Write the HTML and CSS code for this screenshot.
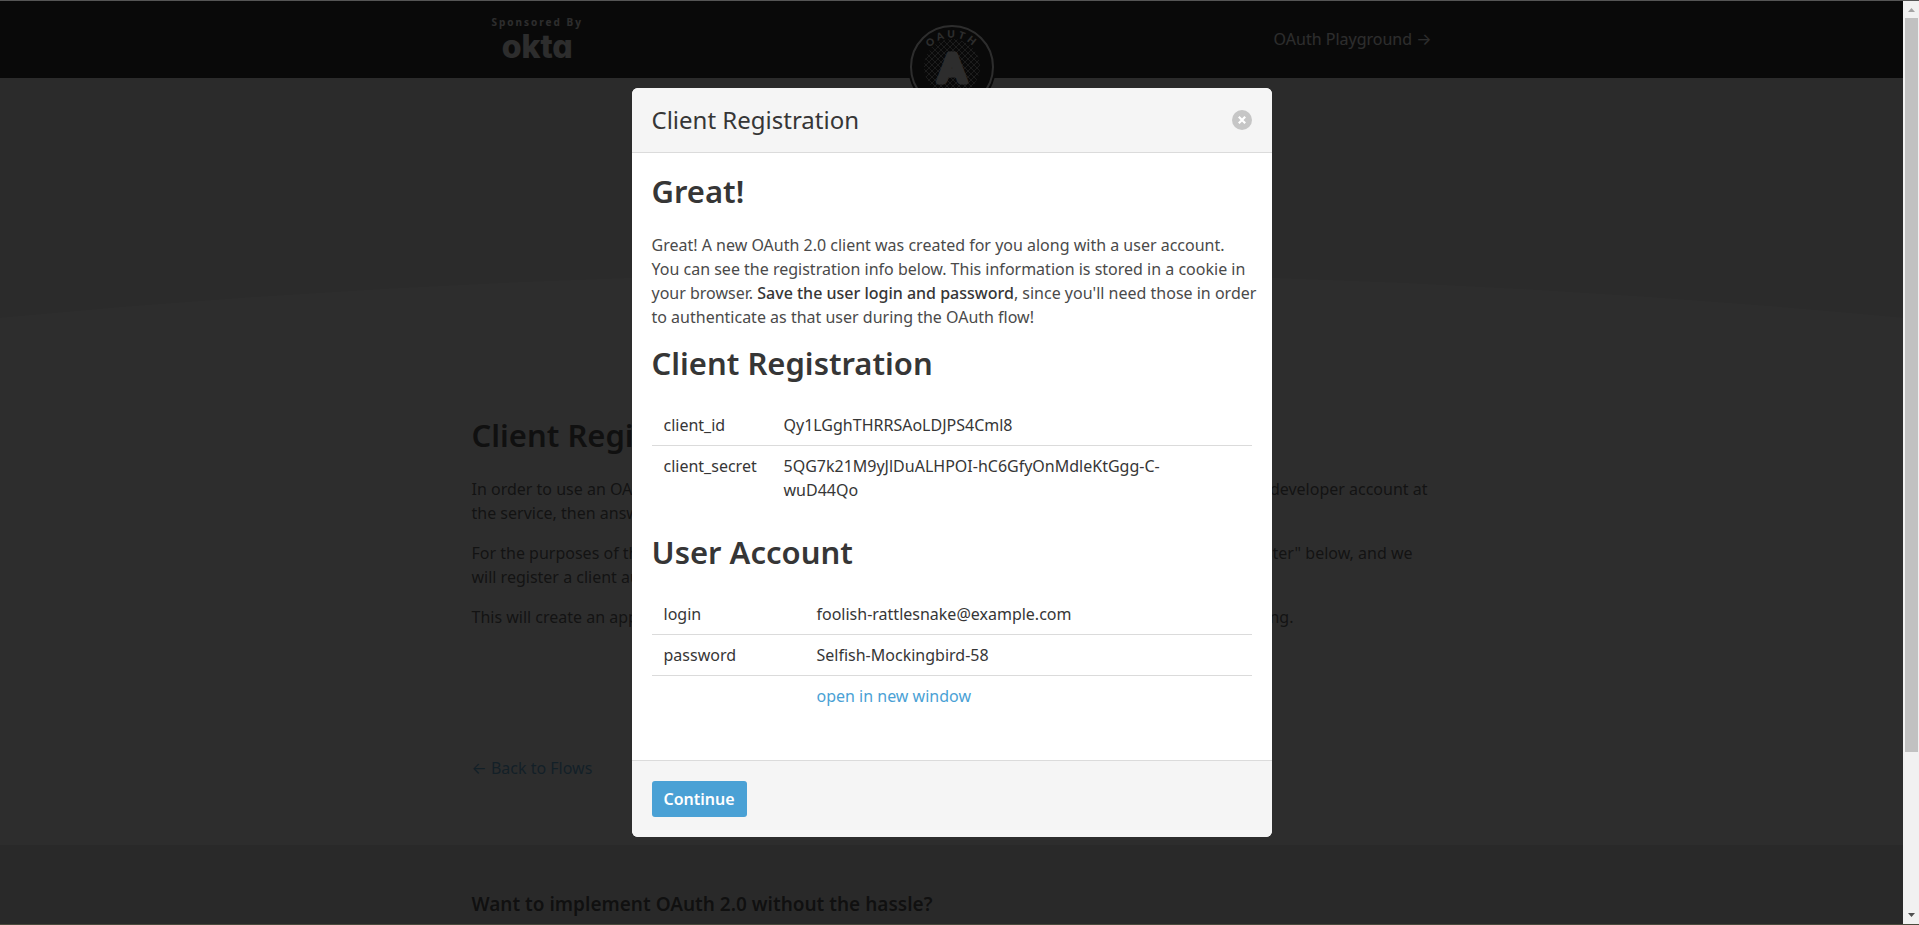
FILE: index.html
```html
<!DOCTYPE html>
<html lang="en">
<head>
<meta charset="utf-8">
<title>OAuth 2.0 Playground</title>
<link rel="stylesheet" href="styles.css">
</head>
<body>
<div class="page">
  <header class="navbar">
    <div class="container navbar-grid">
      <a class="sponsor" href="#">
        <span class="sponsor-label">Sponsored By</span>
        <span class="sponsor-logo">okta</span>
      </a>
      <svg class="oauth-logo" viewBox="0 0 88 88" role="img" aria-label="OAuth">
        <defs>
          <pattern id="mesh" width="6" height="6" patternUnits="userSpaceOnUse">
            <path d="M0 0L6 6M6 0L0 6" stroke="#888" stroke-width="1"/>
          </pattern>
          <path id="arc" d="M14.500 44A29.500 29.500 0 0 1 73.500 44"/>
        </defs>
        <circle cx="44" cy="44" r="44" fill="#000"/>
        <circle cx="44" cy="44" r="41" fill="none" stroke="#fff" stroke-width="2"/>
        <circle cx="44" cy="44" r="28" fill="url(#mesh)"/>
        <text class="logo-arc-text"><textPath href="#arc" startOffset="50%" text-anchor="middle">OAUTH</textPath></text>
        <text class="logo-letter" x="44" y="59" text-anchor="middle">A</text>
      </svg>
      <a class="navbar-link" href="#">OAuth Playground <span class="arrow">→</span></a>
    </div>
  </header>

  <div class="hero">
    <svg class="hero-curve" viewBox="0 0 1903 339" preserveAspectRatio="none" aria-hidden="true">
      <path d="M0 240Q951 150 1903 240V339H0Z" fill="#fff"/>
    </svg>
  </div>

  <main class="container content">
    <h1 class="title">Client Registration</h1>
    <p class="copy">
      <span class="line"><span>In order to use an OAuth API, you'll first need to register your application.</span> <span>This involves a developer account at</span></span>
      <span class="line">the service, then answering a few questions about your application.</span>
    </p>
    <p class="copy">
      <span class="line line-short"><span>For the purposes of this demo, you can register an application here.</span> <span>Click "Register" below, and we</span></span>
      <span class="line">will register a client automatically.</span>
    </p>
    <p class="copy">
      <span class="line line-half"><span>This will create an application and a user account</span> <span>that you can use for testing.</span></span>
    </p>
    <a class="link back" href="#"><span class="arrow">←</span> Back to Flows</a>
  </main>

  <footer class="promo">
    <div class="container">
      <h2 class="promo-title">Want to implement OAuth 2.0 without the hassle?</h2>
    </div>
  </footer>

  <div class="modal">
    <section class="modal-card" role="dialog" aria-modal="true" aria-labelledby="modal-title">
      <header class="modal-head">
        <p class="modal-title" id="modal-title">Client Registration</p>
        <button class="close" type="button" aria-label="Close">
          <svg viewBox="0 0 20 20" width="20" height="20" aria-hidden="true"><path d="M6.800 6.800L13.200 13.200M13.200 6.800L6.800 13.200" stroke="#fff" stroke-width="2.200"/></svg>
        </button>
      </header>
      <div class="modal-body">
        <h1 class="title">Great!</h1>
        <p class="intro">Great! A new OAuth 2.0 client was created for you along with a user account.<br>You can see the registration info below. This information is stored in a cookie in<br>your browser. <strong>Save the user login and password</strong>, since you'll need those in order<br>to authenticate as that user during the OAuth flow!</p>
        <h1 class="title">Client Registration</h1>
        <table class="table table-client">
          <tr><th scope="row">client_id</th><td>Qy1LGghTHRRSAoLDJPS4Cml8</td></tr>
          <tr><th scope="row">client_secret</th><td>5QG7k21M9yJlDuALHPOI-hC6GfyOnMdleKtGgg-C-<wbr>wuD44Qo</td></tr>
        </table>
        <h1 class="title">User Account</h1>
        <table class="table table-user">
          <tr><th scope="row">login</th><td>foolish-rattlesnake@example.com</td></tr>
          <tr><th scope="row">password</th><td>Selfish-Mockingbird-58</td></tr>
          <tr><td></td><td><a class="link" href="#">open in new window</a></td></tr>
        </table>
      </div>
      <footer class="modal-foot">
        <button class="button" type="button">Continue</button>
      </footer>
    </section>
  </div>
</div>
<div class="scrollbar" aria-hidden="true">
  <svg class="scroll-arrow" viewBox="0 0 16 16"><path d="M5 11L8.500 7L12 11Z" fill="#a3a3a3"/></svg>
  <div class="scroll-track"><div class="scroll-thumb"></div></div>
  <svg class="scroll-arrow" viewBox="0 0 16 16"><path d="M5 5L8.500 9L12 5Z" fill="#505050"/></svg>
</div>
</body>
</html>
```

FILE: styles.css
```css
* {
  box-sizing: border-box;
  margin: 0;
  padding: 0;
}

body {
  display: flex;
  height: 100vh;
  overflow: hidden;
  border-top: 1px solid #555;
  border-bottom: 1px solid #4a4a3c;
  background: #fff;
  color: #4a4a4a;
  font: 16px/24px "Noto Sans", "Open Sans", sans-serif;
}

.page {
  position: relative;
  flex: 1;
  min-width: 0;
  overflow: hidden;
}

.container {
  width: 100%;
  max-width: 960px;
  margin: 0 auto;
}

.link {
  color: #4aa1d5;
  text-decoration: none;
}

.arrow {
  font-family: Inter, sans-serif;
}

/* Top bar */
.navbar {
  height: 77px;
  background: #000;
}

.navbar-grid {
  display: grid;
  grid-template-columns: 1fr 88px 1fr;
}

.sponsor {
  justify-self: start;
  display: flex;
  flex-direction: column;
  align-items: center;
  padding: 14px 0 0 20px;
  color: #fff;
  text-decoration: none;
}

.sponsor-label {
  font-size: 10px;
  font-weight: 700;
  line-height: 14px;
  letter-spacing: 2px;
}

.sponsor-logo {
  font-family: Inter, sans-serif;
  font-size: 32px;
  font-weight: 800;
  line-height: 36px;
  font-feature-settings: "cv11";
}

.oauth-logo {
  position: relative;
  z-index: 1;
  width: 88px;
  height: 88px;
  margin-top: 22px;
  margin-bottom: -33px;
}

.logo-arc-text {
  fill: #fff;
  font: 900 10px Lato, sans-serif;
  letter-spacing: 3px;
}

.logo-letter {
  fill: #fff;
  stroke: #fff;
  stroke-width: 5px;
  stroke-linejoin: round;
  font: 900 38px Lato, sans-serif;
}

.navbar-link {
  justify-self: end;
  padding-top: 26px;
  color: #fff;
  text-decoration: none;
}

/* Banner with curved lower edge */
.hero {
  height: 339px;
  background: #f0f0f0;
}

.hero-curve {
  display: block;
  width: 100%;
  height: 100%;
}

.title {
  color: #363636;
  font-size: 31px;
  font-weight: 600;
  line-height: 36px;
}

/* Page copy */
.content {
  display: flex;
  flex-direction: column;
  height: 428px;
}

.content .title {
  margin-bottom: 24px;
}

.copy {
  margin-bottom: 16px;
}

.line {
  display: flex;
  justify-content: space-between;
  max-width: 956px;
  white-space: nowrap;
}

.line-short {
  max-width: 941px;
}

.line-half {
  max-width: 822px;
}

.back {
  margin-top: auto;
  margin-bottom: 65px;
}

.promo {
  height: 200px;
  padding-top: 47px;
  background: #e4e4e4;
}

.promo-title {
  color: #363636;
  font-size: 19px;
  font-weight: 600;
}

/* Dialog */
.modal {
  position: absolute;
  inset: 0;
  z-index: 2;
  display: flex;
  align-items: center;
  justify-content: center;
  background: rgba(10, 10, 10, 0.86);
}

.modal-card {
  width: 640px;
  border-radius: 6px;
  overflow: hidden;
  background: #fff;
}

.modal-head,
.modal-foot {
  display: flex;
  align-items: center;
  padding: 20px;
  background: #f5f5f5;
}

.modal-head {
  justify-content: space-between;
  border-bottom: 1px solid #dbdbdb;
}

.modal-foot {
  border-top: 1px solid #dbdbdb;
}

.modal-title {
  color: #363636;
  font-size: 24px;
}

.close {
  width: 20px;
  height: 20px;
  border: 0;
  border-radius: 50%;
  background: #c6c6c6;
}

.close svg {
  display: block;
}

.modal-body {
  padding: 20px;
}

.intro {
  margin: 24px 0 16px;
  white-space: nowrap;
}

.intro strong {
  font-weight: 500;
  color: #363636;
}

.table {
  width: 100%;
  margin: 24px 0;
  border-collapse: separate;
  border-spacing: 0;
  table-layout: fixed;
  color: #363636;
}

.table th,
.table td {
  padding: 8px 12px;
  border-bottom: 1px solid #dbdbdb;
  font-weight: 400;
  text-align: left;
  vertical-align: top;
}

.table tr:last-child > * {
  border-bottom: 0;
}

.table-client th {
  width: 120px;
}

.table-client td {
  padding-right: 56px;
}

.table-user th {
  width: 153px;
}

.button {
  height: 36px;
  padding: 0 12px;
  border: 0;
  border-radius: 3px;
  background: #4aa1d5;
  color: #fff;
  font: 600 16px/24px "Noto Sans", "Open Sans", sans-serif;
}

/* Window scrollbar */
.scrollbar {
  display: flex;
  flex-direction: column;
  width: 16px;
  background: #f1f1f1;
}

.scroll-arrow {
  width: 16px;
  height: 16px;
}

.scroll-track {
  flex: 1;
  padding: 1px 1px 0 2px;
}

.scroll-thumb {
  height: 82.5%;
  background: #c1c1c1;
}
```
